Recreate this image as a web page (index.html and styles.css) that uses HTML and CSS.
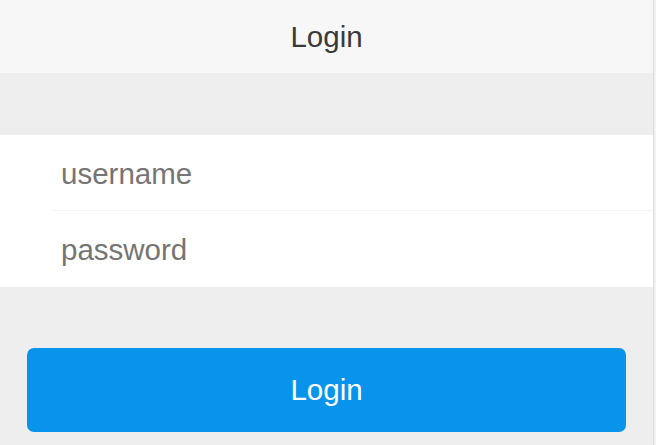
FILE: index.html
```html
<!DOCTYPE html>
<html>
<head>
<meta charset="utf-8">
<link rel="stylesheet" href="styles.css">
</head>
<body>
<div class="page">
  <div class="main">
    <header class="bar">Login</header>
    <form class="form">
      <div class="group">
        <div class="item"><input class="field" type="text" placeholder="username"></div>
        <div class="item item-sep"><input class="field" type="password" placeholder="password"></div>
      </div>
      <button class="btn" type="button">Login</button>
    </form>
  </div>
  <div class="edge"></div>
</div>
</body>
</html>
```
FILE: styles.css
```css
html, body {
  margin: 0;
  padding: 0;
  height: 100%;
  background: #eeeeee;
  font-family: "Liberation Sans", Arial, sans-serif;
  overflow: hidden;
}
.page {
  display: flex;
  height: 445px;
}
.main {
  flex: 1;
  display: flex;
  flex-direction: column;
}
.edge {
  width: 2px;
  border-left: 1px solid #dcdcdc;
  background: #f2f2f2;
}
.bar {
  height: 73px;
  background: #f7f7f7;
  color: #3a3a3a;
  font-size: 29.5px;
  display: flex;
  align-items: center;
  justify-content: center;
}
.form {
  margin: 62px 0 0;
  display: flex;
  flex-direction: column;
}
.group {
  background: #ffffff;
  display: flex;
  flex-direction: column;
}
.item {
  margin-left: 52px;
  height: 75px;
  display: flex;
}
.item-sep {
  border-top: 1px solid #f2f2f2;
  height: 76px;
}
.field {
  flex: 1;
  border: 0;
  outline: 0;
  background: transparent;
  padding: 2px 0 0 9px;
  font-family: "Liberation Sans", Arial, sans-serif;
  font-size: 29.5px;
  color: #333;
}
.field::placeholder {
  color: #757575;
}
.btn {
  margin: 61px 27px 0;
  height: 84px;
  border: 0;
  border-radius: 7px;
  background: #0994ec;
  color: #ffffff;
  font-family: "Liberation Sans", Arial, sans-serif;
  font-size: 29.5px;
  padding: 0;
}
```
